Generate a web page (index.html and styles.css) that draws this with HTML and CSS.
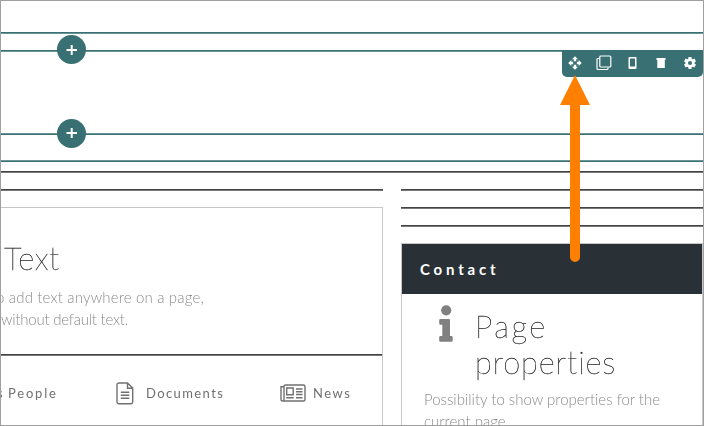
FILE: index.html
```html
<!DOCTYPE html>
<html lang="en">
<head>
<meta charset="utf-8">
<title>Page editor</title>
<link rel="stylesheet" href="styles.css">
</head>
<body>
<main class="editor">
  <div class="zone zone-top"></div>
  <div class="zone zone-drop">
    <button class="add"><svg width="29" height="29" viewBox="0 0 29 29"><path d="M9.5 15h10.5M14.7 10v10" /></svg></button>
    <div class="toolbar">
      <svg class="tool" viewBox="-1 -1 26 26"><path d="M10 9h4V6h3l-5-5-5 5h3v3zm-1 1H6V7l-5 5 5 5v-3h3v-4zm14 2l-5-5v3h-3v4h3v3l5-5zm-9 3h-4v3H7l5 5 5-5h-3v-3z"/></svg>
      <svg class="tool outline" viewBox="0 0 16 16"><rect x="3.8" y="1" width="11" height="11" rx="1"/><path d="M3.5 3.5H2Q1 3.5 1 4.5V13.5Q1 14.5 2 14.5H11Q12 14.5 12 13.5V12.4"/></svg>
      <svg class="tool" viewBox="0 0 16 16"><path fill-rule="evenodd" d="M4.500 2h6q1 0 1 1v10q0 1-1 1h-6q-1 0-1-1V3q0-1 1-1zm.500 1.400v8h5V3.400z"/></svg>
      <svg class="tool" viewBox="0 0 16 16"><path d="M3.500 3h9v2h-.700v8H4.300V5H3.500z"/></svg>
      <svg class="tool" viewBox="0 0 16 16"><path d="M8 2v12M2.800 5l10.400 6M2.800 11l10.400-6" stroke="#fff" stroke-width="3.200"/><circle cx="8" cy="8" r="3.300" fill="#387073" stroke="#fff" stroke-width="2.600"/></svg>
    </div>
  </div>
  <div class="zone zone-body"></div>
  <div class="zone zone-flip zone-end">
    <button class="add"><svg width="29" height="29" viewBox="0 0 29 29"><path d="M9.500 14h10.500M14.700 9v10" /></svg></button>
  </div>
  <div class="zone zone-flip zone-last"></div>
  <div class="divider"></div>
  <div class="columns">
    <section class="column">
      <div class="divider"></div>
      <div class="card card-main">
        <div class="intro">
          <h2 class="title"><span class="t-text">Text</span></h2>
          <p class="copy"><span class="t-add">o add text anywhere on a page,</span></p>
          <p class="copy"><span class="t-without">without default text.</span></p>
        </div>
        <nav class="links">
          <span class="link people"><span class="cut">s</span><span class="t-people">People</span></span>
          <span class="link documents">
            <svg width="18" height="23" viewBox="0 0 18 23"><path d="M3 1h8.500L16.700 6v14q0 1.700-1.700 1.700H3Q1 21.700 1 20V3Q1 1 3 1zM11.500 1v5.200h5.200M4.800 10.300h8.500M4.800 13.300h8.500M4.800 16.300h8.500"/></svg>
            <span class="t-documents">Documents</span>
          </span>
          <span class="link news">
            <svg width="26" height="18" viewBox="0 0 26 18"><path d="M4 15.500V2.500Q4 1 5.500 1H23.500Q25 1 25 2.500V15.500Q25 17 23.500 17H2.500Q1 17 1 15.500V2.700H3.700M4 15.500Q4 17 2.500 17M6.700 4h6.500v6.700H6.700zM16 5h6.500M16 7.700h6.500M16 10.500h6.500M6.200 13.700h7.500M16 13.700h6.500"/></svg>
            <span class="t-news">News</span>
          </span>
        </nav>
      </div>
    </section>
    <section class="column">
      <div class="divider"></div>
      <div class="divider"></div>
      <div class="divider"></div>
      <div class="card">
        <header class="card-head"><span class="t-contact">Contact</span></header>
        <div class="property">
          <svg class="info" width="14" height="37" viewBox="0 0 14 37"><circle cx="7.200" cy="5.300" r="5.100"/><path d="M1.500 14h8.300q1.200 0 1.200 1.200V31h1.300q1.400 0 1.400 1.300v3.200q0 1.300-1.400 1.300H1.500Q.2 36.800.2 35.500v-3.200Q.2 31 1.500 31H3.300V19.800H1.500Q.2 19.800.2 18.500v-3.200Q.2 14 1.500 14z"/></svg>
          <h2 class="title"><span class="t-page">Page</span><br><span class="t-properties">properties</span></h2>
        </div>
        <p class="copy note"><span class="t-possibility">Possibility to show properties for the</span><br><span class="t-current">current page.</span></p>
      </div>
    </section>
  </div>
  <svg class="arrow" width="30" height="188" viewBox="0 0 30 188"><path d="M15 0 30 30H20V182a5 5 0 0 1-10 0V30H0z"/></svg>
</main>
</body>
</html>
```
FILE: styles.css
```css
* { box-sizing: border-box; }
body { margin: 0; background: #fff; }
.editor {
  position: relative;
  width: 704px;
  height: 426px;
  overflow: hidden;
  border: 1px solid #a0a0a0;
  font-family: Lato, "Open Sans", sans-serif;
  font-variant-ligatures: none;
}
.zone { position: relative; border-bottom: 1px solid #387073; box-shadow: 0 1px #6b9496; }
.zone-flip { border-color: #6b9496; box-shadow: 0 1px #387073; }
.zone-top { height: 32px; }
.zone-drop { height: 18px; }
.zone-body { height: 0; border: 0; box-shadow: none; }
.zone-end { height: 83px; }
.zone-last { height: 27px; }
.zone-last + .divider { height: 11px; }
.divider { height: 18px; border-bottom: 1px solid #444; box-shadow: 0 1px #777; }
.add {
  position: absolute;
  left: 56px;
  bottom: -14px;
  width: 29px;
  height: 29px;
  padding: 0;
  border: 0;
  border-radius: 50%;
  background: #387073;
}
.add svg { display: block; fill: none; stroke: #fff; stroke-width: 2; }
.zone-end .add { bottom: -15px; }
.toolbar {
  position: absolute;
  z-index: 1;
  right: 0;
  top: 17px;
  width: 141px;
  height: 27px;
  padding: 0 5px 2px;
  display: flex;
  align-items: center;
  justify-content: space-between;
  border-radius: 0 0 5px 5px;
  background: #387073;
}
.tool { width: 16px; height: 16px; fill: #fff; }
.outline { fill: none; stroke: #fff; stroke-width: 1.2; }
.columns { display: grid; grid-template-columns: 382px 302px; gap: 18px; }
.card { margin-top: 17px; height: 300px; border: 1px solid #c6c6c6; background: #fff; }
.card-main { border-left: 0; }
.intro { height: 147px; padding-top: 32px; border-bottom: 1px solid #444; box-shadow: 0 1px #777; }
.title { margin: 0; font-size: 31px; line-height: 36px; font-weight: 100; color: #222; -webkit-text-stroke: 0.3px #222; will-change: transform; }
.intro .title { padding-left: 3px; }
.copy { margin: 0; font-size: 15px; line-height: 22px; font-weight: 300; color: #8c8c8c; white-space: nowrap; will-change: transform; }
.intro .title + .copy { margin-top: 10px; }
.copy span, .title span, .link span { display: inline-block; white-space: nowrap; }
.t-text { letter-spacing: 0.6px; }
.t-add { margin-left: -5px; letter-spacing: 0.17px; }
.t-without { letter-spacing: -0.22px; }
.t-page { letter-spacing: 2.5px; }
.t-properties { letter-spacing: 0.85px; }
.links { display: flex; align-items: center; height: 76px; font-size: 13px; color: #707070; will-change: transform; }
.link { display: flex; align-items: center; }
.link svg { fill: none; stroke: #707070; stroke-width: 1.4; }
.cut { margin-left: -4px; width: 11px; }
.people { width: 115px; }
.documents { width: 164px; gap: 12px; }
.news { gap: 7px; }
.card-head { height: 50px; padding-left: 18px; line-height: 50px; font-size: 15px; font-weight: 700; color: #fff; background: #293136; }
.property { display: flex; gap: 22px; padding: 11px 0 0 37px; }
.info { flex: none; fill: #808080; }
.property .title { padding-top: 3px; }
.note { padding: 8px 0 0 22px; }
.arrow { position: absolute; z-index: 2; left: 559px; top: 74px; fill: #ff8000; }
.t-contact { letter-spacing: 3.8px; }
.t-people { letter-spacing: 1.8px; }
.t-documents { letter-spacing: 1.4px; }
.t-news { letter-spacing: 1.5px; }
```
